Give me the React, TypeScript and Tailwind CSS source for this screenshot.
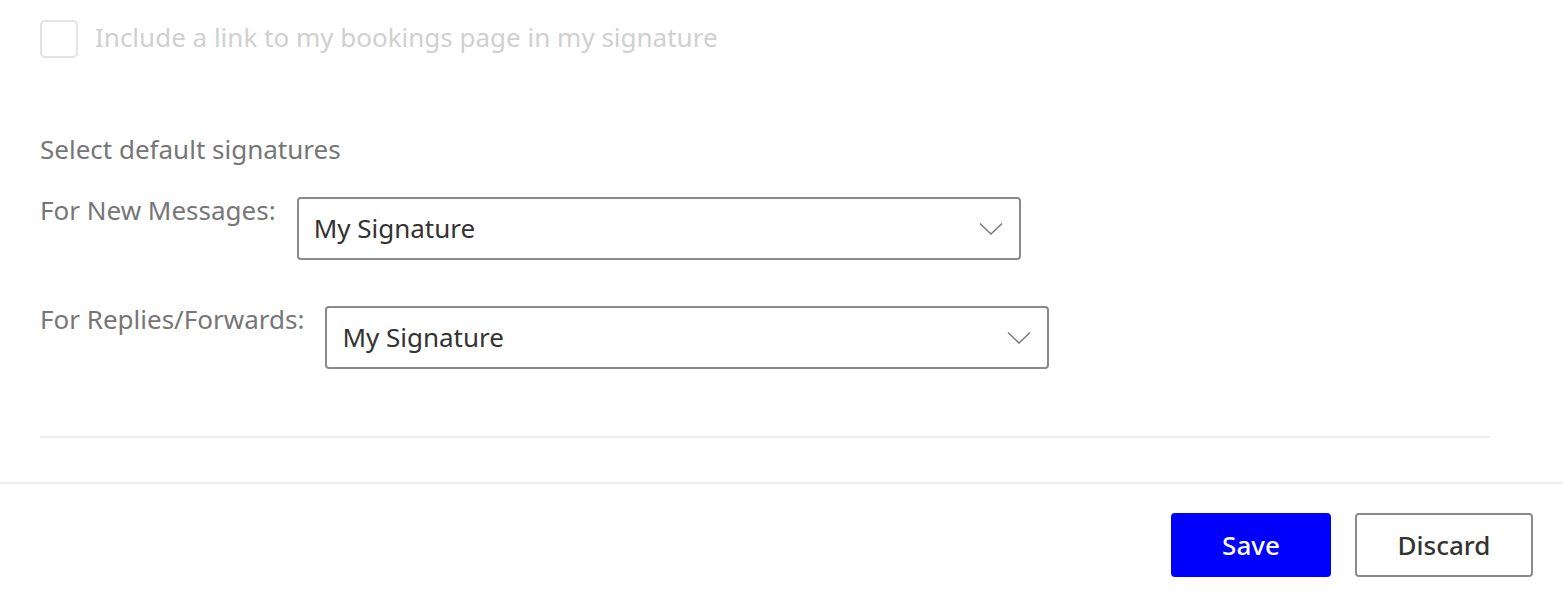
import React, { useState } from 'react';

const font = { fontFamily: '"Noto Sans", "Open Sans", Arial, sans-serif' };

const Chevron: React.FC = () => (
  <svg width="24" height="14" viewBox="0 0 24 14" fill="none" className="shrink-0">
    <path d="M1 1.5 L12 12 L23 1.5" stroke="#7a7a7a" strokeWidth="1.5" strokeLinejoin="miter" />
  </svg>
);

const SignatureSelect: React.FC<{ value: string }> = ({ value }) => (
  <button className="mt-[4px] w-[724px] h-[63px] flex items-center justify-between pl-[15px] pr-[16px] border-2 border-[#8a8a8a] rounded-[4px] bg-white text-[#333333] text-[26px]">
    <span>{value}</span>
    <Chevron />
  </button>
);

export default function App() {
  const [includeLink, setIncludeLink] = useState(false);

  return (
    <div className="w-[1563px] h-[606px] bg-white overflow-hidden" style={font}>
      <div className="px-[40px] pt-[20px]">
        <label className="flex items-center gap-[17px] cursor-default">
          <span
            onClick={() => setIncludeLink(!includeLink)}
            className="w-[38px] h-[38px] border-2 border-[#e3e3e3] rounded-[5px] bg-white"
          />
          <span className="text-[26px] leading-[34px] pb-[4px] text-[#d0d0d0]">Include a link to my bookings page in my signature</span>
        </label>

        <div className="mt-[74px] text-[26px] leading-[34px] text-[#767676]">Select default signatures</div>

        <div className="mt-[27px] flex items-start">
          <span className="text-[26px] text-[#767676] leading-[34px] mr-[21px]">For New Messages:</span>
          <SignatureSelect value="My Signature" />
        </div>

        <div className="mt-[42px] flex items-start">
          <span className="text-[26px] text-[#767676] leading-[34px] mr-[21px]">For Replies/Forwards:</span>
          <SignatureSelect value="My Signature" />
        </div>

        <div className="mt-[67px] w-[1450px] h-[2px] bg-[#efefef]" />
      </div>

      <div className="mt-[44px] h-[2px] bg-[#efefef]" />

      <div className="flex justify-end gap-[24px] pt-[29px] pr-[30px]">
        <button className="w-[160px] h-[64px] rounded-[4px] bg-[#0000ff] text-white text-[26px] font-medium">Save</button>
        <button className="w-[178px] h-[64px] rounded-[4px] border-2 border-[#8a8a8a] bg-white text-[#333333] text-[26px] font-medium">Discard</button>
      </div>
    </div>
  );
}
